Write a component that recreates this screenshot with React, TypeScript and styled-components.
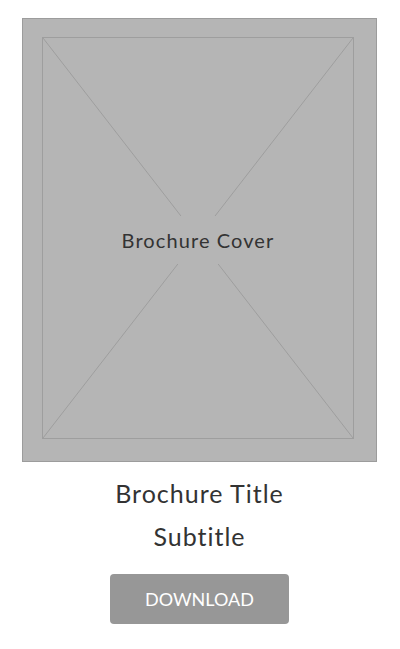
import styled, { createGlobalStyle } from 'styled-components';

const GlobalStyle = createGlobalStyle`
  body {
    margin: 0;
    background: #fff;
    font-family: 'Lato', 'Liberation Sans', sans-serif;
  }
`;

const Page = styled.div`
  width: 400px;
  padding: 18px 23px 0 22px;
  box-sizing: border-box;
  display: flex;
  flex-direction: column;
  align-items: center;
`;

const Cover = styled.div`
  width: 355px;
  height: 444px;
  box-sizing: border-box;
  border: 1px solid #9c9c9c;
  background: #b5b5b5;
  padding: 18px 22px 22px 19px;
  display: flex;
`;

const Placeholder = styled.div`
  position: relative;
  flex: 1;
  border: 1px solid #9e9e9e;
  display: flex;
  align-items: center;
  justify-content: center;
  svg {
    position: absolute;
    inset: 0;
    width: 100%;
    height: 100%;
  }
`;

const CoverLabel = styled.span`
  position: relative;
  top: 2px;
  background: #b5b5b5;
  padding: 12px 4px;
  font-size: 20px;
  color: #333;
  letter-spacing: 1.1px;
`;

const Title = styled.h1`
  margin: 16px 0 0;
  font-weight: 400;
  font-size: 25px;
  line-height: 30px;
  color: #333;
  letter-spacing: 1px;
`;

const Subtitle = styled.h2`
  margin: 13px 0 0;
  font-weight: 400;
  font-size: 25px;
  line-height: 30px;
  color: #333;
  letter-spacing: 1px;
`;

const DownloadButton = styled.button`
  margin-top: 23px;
  width: 179px;
  height: 50px;
  border: none;
  border-radius: 4px;
  background: #979797;
  color: #fff;
  font-family: inherit;
  font-size: 18px;
  letter-spacing: 0;
  cursor: pointer;
`;

export default function App() {
  return (
    <>
      <GlobalStyle />
      <Page>
        <Cover>
          <Placeholder>
            <svg viewBox="0 0 100 100" preserveAspectRatio="none">
              <line x1="0" y1="0" x2="100" y2="100" stroke="#9e9e9e" strokeWidth="1" vectorEffect="non-scaling-stroke" />
              <line x1="100" y1="0" x2="0" y2="100" stroke="#9e9e9e" strokeWidth="1" vectorEffect="non-scaling-stroke" />
            </svg>
            <CoverLabel>Brochure Cover</CoverLabel>
          </Placeholder>
        </Cover>
        <Title>Brochure Title</Title>
        <Subtitle>Subtitle</Subtitle>
        <DownloadButton type="button">DOWNLOAD</DownloadButton>
      </Page>
    </>
  );
}
